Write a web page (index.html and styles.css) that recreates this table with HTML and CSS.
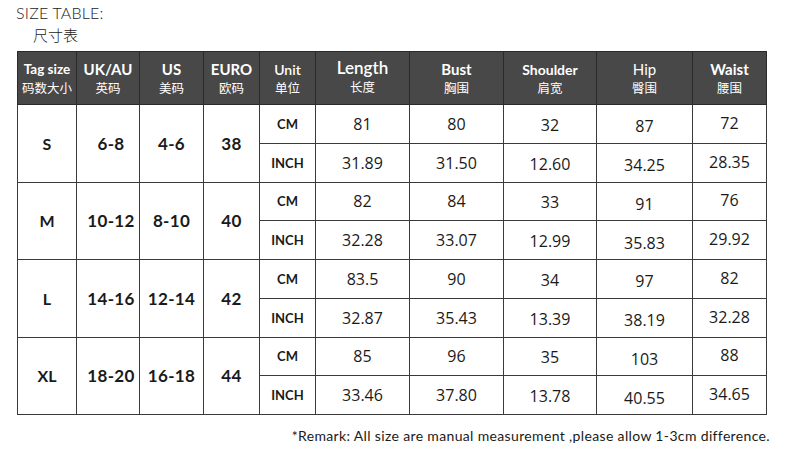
FILE: index.html
```html
<!DOCTYPE html>
<html>
<head>
<meta charset="utf-8">
<link rel="stylesheet" href="styles.css">
</head>
<body>
<div class="page">
  <div class="title">SIZE TABLE:</div>
  <div class="subtitle">尺寸表</div>
  <table class="sizes">
    <colgroup>
      <col class="c1"><col class="c2"><col class="c3"><col class="c4"><col class="c5">
      <col class="c6"><col class="c7"><col class="c8"><col class="c9"><col class="c10">
    </colgroup>
    <thead>
      <tr>
        <th><span class="en tag">Tag size</span><span class="zh">码数大小</span></th>
        <th><span class="en">UK/AU</span><span class="zh">英码</span></th>
        <th><span class="en">US</span><span class="zh">美码</span></th>
        <th><span class="en">EURO</span><span class="zh">欧码</span></th>
        <th><span class="en unit">Unit</span><span class="zh">单位</span></th>
        <th class="len"><span class="en big">Length</span><span class="zh">长度</span></th>
        <th><span class="en">Bust</span><span class="zh">胸围</span></th>
        <th><span class="en sh">Shoulder</span><span class="zh">肩宽</span></th>
        <th><span class="en light">Hip</span><span class="zh">臀围</span></th>
        <th><span class="en">Waist</span><span class="zh">腰围</span></th>
      </tr>
    </thead>
    <tbody>
      <tr>
        <td rowspan="2" class="sz">S</td><td rowspan="2" class="num uk">6-8</td><td rowspan="2" class="num">4-6</td><td rowspan="2" class="num">38</td>
        <td class="u">CM</td><td class="v">81</td><td class="v">80</td><td class="v lo">32</td><td class="v lo2">87</td><td class="v hi">72</td>
      </tr>
      <tr>
        <td class="u">INCH</td><td class="v">31.89</td><td class="v">31.50</td><td class="v lo">12.60</td><td class="v lo2">34.25</td><td class="v hi">28.35</td>
      </tr>
      <tr>
        <td rowspan="2" class="sz">M</td><td rowspan="2" class="num uk">10-12</td><td rowspan="2" class="num">8-10</td><td rowspan="2" class="num">40</td>
        <td class="u">CM</td><td class="v">82</td><td class="v">84</td><td class="v lo">33</td><td class="v lo2">91</td><td class="v hi">76</td>
      </tr>
      <tr>
        <td class="u">INCH</td><td class="v">32.28</td><td class="v">33.07</td><td class="v lo">12.99</td><td class="v lo2">35.83</td><td class="v hi">29.92</td>
      </tr>
      <tr>
        <td rowspan="2" class="sz">L</td><td rowspan="2" class="num uk">14-16</td><td rowspan="2" class="num">12-14</td><td rowspan="2" class="num">42</td>
        <td class="u">CM</td><td class="v">83.5</td><td class="v">90</td><td class="v lo">34</td><td class="v lo2">97</td><td class="v hi">82</td>
      </tr>
      <tr>
        <td class="u">INCH</td><td class="v">32.87</td><td class="v">35.43</td><td class="v lo">13.39</td><td class="v lo2">38.19</td><td class="v hi">32.28</td>
      </tr>
      <tr>
        <td rowspan="2" class="sz">XL</td><td rowspan="2" class="num uk">18-20</td><td rowspan="2" class="num">16-18</td><td rowspan="2" class="num">44</td>
        <td class="u">CM</td><td class="v">85</td><td class="v">96</td><td class="v lo">35</td><td class="v lo2">103</td><td class="v hi">88</td>
      </tr>
      <tr>
        <td class="u">INCH</td><td class="v">33.46</td><td class="v">37.80</td><td class="v lo">13.78</td><td class="v lo2">40.55</td><td class="v hi">34.65</td>
      </tr>
    </tbody>
  </table>
  <div class="remark">*Remark: All size are manual measurement ,please allow 1-3cm difference.</div>
</div>
</body>
</html>
```

FILE: styles.css
```css
html, body {
  margin: 0;
  padding: 0;
  background: #ffffff;
}

.page {
  width: 790px;
  height: 468px;
  padding: 4px 0 0 0;
  box-sizing: border-box;
  font-family: "Lato", "Noto Sans CJK SC", sans-serif;
  color: #1a1a1a;
}

.title {
  margin-left: 16px;
  font-size: 16px;
  font-weight: 300;
  line-height: 18px;
  letter-spacing: 0.2px;
  color: #222;
}

.subtitle {
  margin-left: 33px;
  margin-top: 4px;
  font-size: 15px;
  line-height: 18px;
  font-family: "Noto Sans CJK SC", sans-serif;
  font-weight: 300;
  color: #222;
}

.sizes {
  margin-left: 17px;
  margin-top: 7px;
  border-collapse: collapse;
  table-layout: fixed;
  width: 749px;
}

.c1 { width: 59px; }
.c2 { width: 63px; }
.c3 { width: 64px; }
.c4 { width: 56px; }
.c5 { width: 56px; }
.c6 { width: 94px; }
.c7 { width: 94px; }
.c8 { width: 93px; }
.c9 { width: 96px; }
.c10 { width: 74px; }

.sizes th,
.sizes td {
  border: 1px solid #3a3a3a;
  padding: 0;
  text-align: center;
  vertical-align: middle;
}

.sizes thead tr {
  height: 53px;
}

.sizes thead th {
  background: #484848;
  color: #ffffff;
  border-color: #2a2a2a;
}

.sizes thead th.len {
  padding-bottom: 3px;
}

.en {
  display: block;
  font-size: 15px;
  font-weight: 700;
  line-height: 19px;
}

.en.tag { font-size: 13.5px; }
.en.unit { font-size: 14px; font-weight: 600; }
.en.sh { font-size: 14px; }
.en.big { font-size: 17px; font-weight: 600; line-height: 21px; }
.en.light { font-weight: 400; }

.zh {
  display: block;
  font-family: "Noto Sans CJK SC", sans-serif;
  font-size: 12.5px;
  line-height: 18px;
  font-weight: 400;
}

.sizes tbody tr {
  height: 38.75px;
}

.sz {
  font-size: 16px;
  font-weight: 700;
  padding-left: 3px;
}

.num {
  font-size: 17px;
  font-weight: 700;
  letter-spacing: 0.3px;
}

.num.uk {
  padding-left: 6px;
}

.u {
  font-size: 13px;
  font-weight: 700;
  padding-bottom: 3px;
}

.v {
  font-family: "Open Sans", "Liberation Sans", sans-serif;
  font-size: 16px;
  line-height: 22px;
  font-weight: 400;
  color: #1a1a1a;
}

.v.lo { padding-top: 2px; }
.v.lo2 { padding-top: 5px; }
.v.hi { padding-bottom: 2px; }

.remark {
  text-align: right;
  margin-right: 20px;
  margin-top: 12px;
  font-size: 14px;
  line-height: 17px;
  font-family: "Lato", sans-serif;
  letter-spacing: 0.35px;
  color: #1a1a1a;
}
```
